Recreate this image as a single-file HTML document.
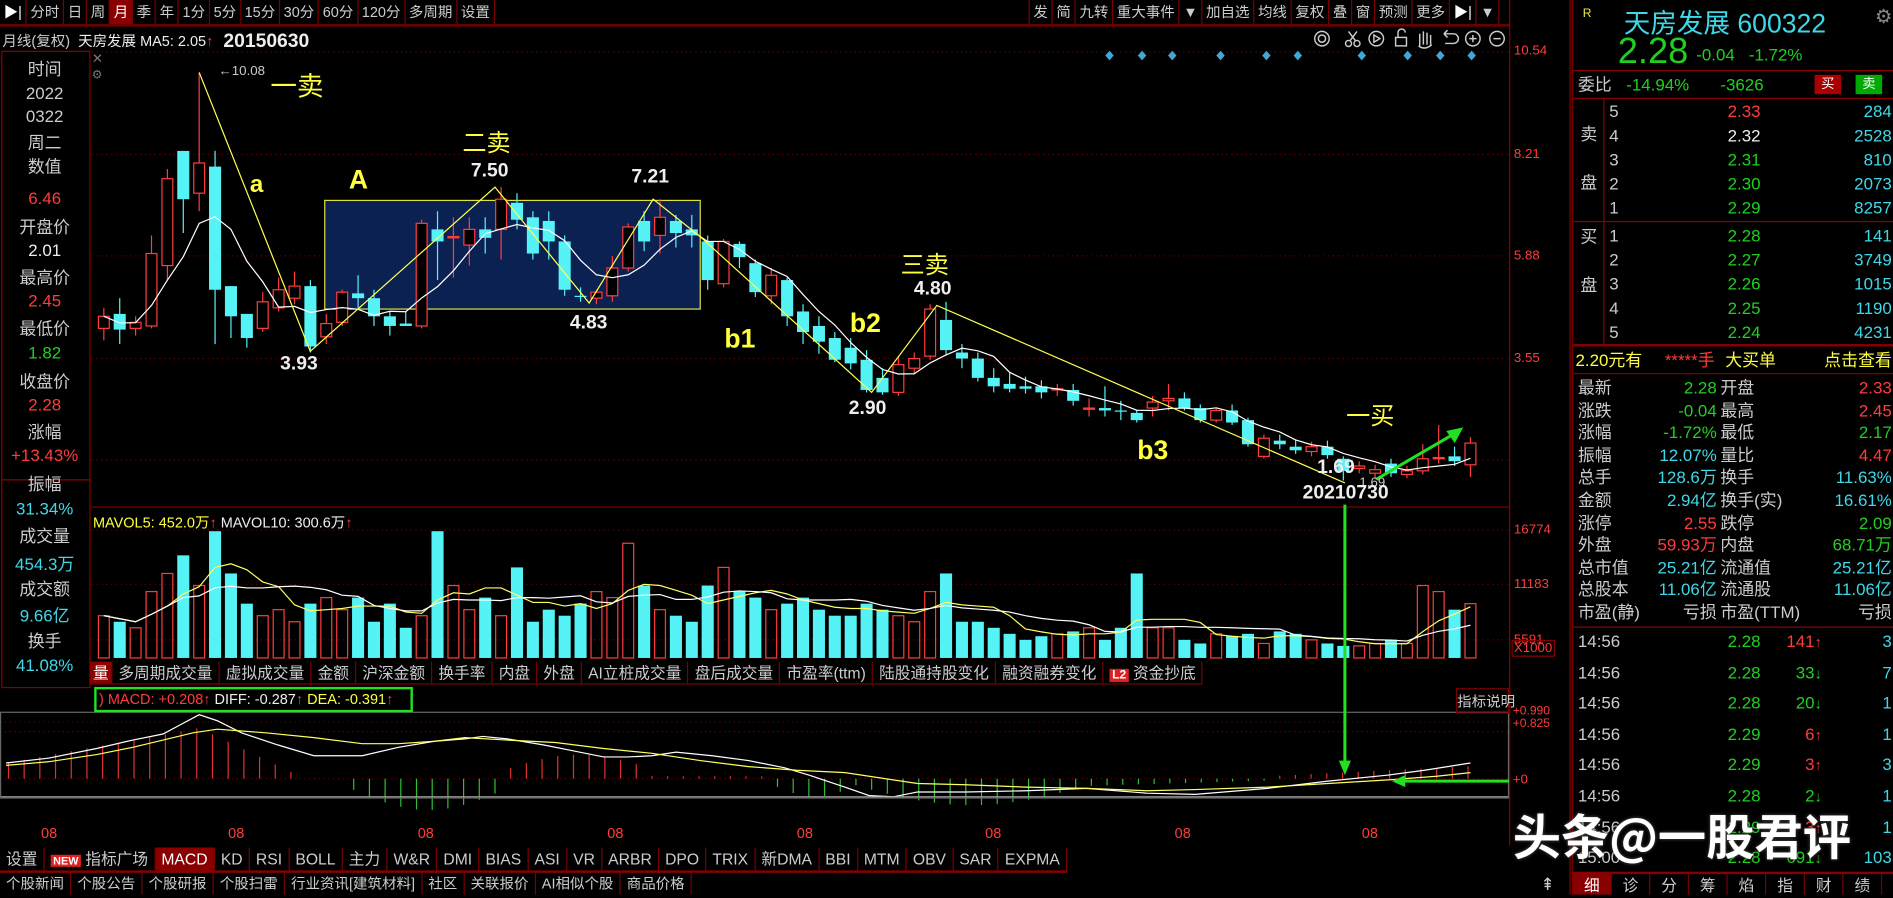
<!DOCTYPE html>
<html><head><meta charset="utf-8">
<style>
*{margin:0;padding:0;box-sizing:border-box}
html,body{width:1893px;height:894px;background:#000;overflow:hidden}
#w{position:absolute;left:0;top:0;width:1568px;height:741px;transform:scale(1.20727);transform-origin:0 0;background:#000;font-family:"Liberation Sans","Noto Sans CJK SC",sans-serif;color:#ddd;font-size:12px}
.a{position:absolute;white-space:nowrap}
.tb{position:absolute;display:flex;height:21px;border-bottom:1px solid #7a0000}
.tb span{border-right:1px solid #7a0000;padding:0 3px;line-height:21px;font-size:12px;color:#ccc}
.tb span.on{background:#8a0000;color:#fff}
.lp div{position:absolute;left:0;width:74px;text-align:center;font-size:14px}
.r{color:#ff3c3c}.g{color:#20d020}.c{color:#3fd8e8}.w{color:#eee}.y{color:#ffff40}.gr{color:#ccc}
.rp{position:absolute;left:1302px;top:0;width:266px;height:741px;border-left:1px solid #7a0000}
.row{position:absolute;left:0;width:266px;height:20px;font-size:14px;line-height:20px}
.row span{position:absolute}
.hl{position:absolute;left:0;width:266px;height:1px;background:#8a0000}
.bt{position:absolute;display:flex;height:20px}
.bt span{border-right:1px solid #7a0000;padding:0 5px;line-height:20px;font-size:13px;color:#ccc}
</style></head><body><div id="w">

<div class="tb" style="left:0;top:0;width:1250px">
<span style="color:#fff">▶|</span><span>分时</span><span>日</span><span>周</span><span class="on">月</span><span>季</span><span>年</span><span>1分</span><span>5分</span><span>15分</span><span>30分</span><span>60分</span><span>120分</span><span>多周期</span><span>设置</span>
</div>
<div class="tb" style="left:852px;top:0;border-bottom:none">
<span style="border-left:1px solid #7a0000">发</span><span>简</span><span>九转</span><span>重大事件</span><span>▼</span><span>加自选</span><span>均线</span><span>复权</span><span>叠</span><span>窗</span><span>预测</span><span>更多</span><span style="color:#fff">▶|</span><span>▼</span>
</div>
<div class="a" style="left:0;top:21px;width:1250px;height:1px;background:#7a0000"></div>
<div class="a" style="left:1250px;top:0;width:1px;height:700px;background:#8a0000"></div>
<div class="a" style="left:1300px;top:0;width:1px;height:741px;background:#8a0000"></div>

<div class="a gr" style="left:2px;top:25px;font-size:12px">月线(复权)&nbsp; <span class="w">天房发展</span> <span class="w">MA5: 2.05</span><span class="r">↑</span></div>
<div class="a w" style="left:185px;top:26px;font-size:16px;font-weight:bold">20150630</div>

<div class="a" style="left:1px;top:42px;width:74px;height:356px;border:1px solid #8a0000"></div>
<div class="a" style="left:1px;top:397px;width:74px;height:173px;border:1px solid #8a0000"></div>
<div class="a" style="left:76px;top:44px;width:10px;height:12px;color:#777;font-size:11px;line-height:10px">✕</div>
<div class="a" style="left:76px;top:57px;width:10px;height:10px;color:#777;font-size:10px">⚙</div>
<div class="lp">
<div class="gr" style="top:47px">时间</div>
<div class="gr" style="top:69px">2022</div>
<div class="gr" style="top:88px">0322</div>
<div class="gr" style="top:108px">周二</div>
<div class="gr" style="top:128px">数值</div>
<div class="r" style="top:156px">6.46</div>
<div class="gr" style="top:178px">开盘价</div>
<div class="w" style="top:199px">2.01</div>
<div class="gr" style="top:220px">最高价</div>
<div class="r" style="top:241px">2.45</div>
<div class="gr" style="top:262px">最低价</div>
<div class="g" style="top:284px">1.82</div>
<div class="gr" style="top:306px">收盘价</div>
<div class="r" style="top:327px">2.28</div>
<div class="gr" style="top:348px">涨幅</div>
<div class="r" style="top:369px">+13.43%</div>
<div class="gr" style="top:391px">振幅</div>
<div class="c" style="top:413px">31.34%</div>
<div class="gr" style="top:434px">成交量</div>
<div class="c" style="top:457px">454.3万</div>
<div class="gr" style="top:478px">成交额</div>
<div class="c" style="top:500px">9.66亿</div>
<div class="gr" style="top:521px">换手</div>
<div class="c" style="top:543px">41.08%</div>
</div>

<svg class="a" style="left:0;top:0" width="1300" height="741" id="sv">
<g stroke="#6a0000" stroke-dasharray="1,3">
<line x1="76" y1="43" x2="1250" y2="43"/><line x1="76" y1="128" x2="1250" y2="128"/><line x1="76" y1="212" x2="1250" y2="212"/><line x1="76" y1="297" x2="1250" y2="297"/><line x1="76" y1="381" x2="1250" y2="381"/>
<line x1="76" y1="439" x2="1250" y2="439"/><line x1="76" y1="484" x2="1250" y2="484"/><line x1="76" y1="530" x2="1250" y2="530"/>
<line x1="0" y1="598" x2="1250" y2="598"/><line x1="0" y1="606" x2="1250" y2="606"/><line x1="0" y1="645" x2="1250" y2="645"/>
</g>
<line x1="76" y1="420" x2="1250" y2="420" stroke="#8a0000"/>
<rect x="269" y="166" width="311" height="90" fill="#0b2152" stroke="#e0e040"/>
<g id="cd"></g>
<polyline id="ma" fill="none" stroke="#fff" stroke-width="1"/>
<g fill="none" stroke="#ffff50" stroke-width="1">
<polyline points="165,60 257,291 410,155 488,251 541,165 580,196 722,325 776,253 1114,400"/>
</g>
<g fill="#3fa8d8" id="dm"></g>
<g id="vol"></g>
<polyline id="mv5" fill="none" stroke="#ffff60"/>
<polyline id="mv10" fill="none" stroke="#fff"/>
<g id="mh"></g>
<polyline fill="none" stroke="#fff" points="5,632 40,628 80,620 110,613 135,608 150,600 165,592 180,597 200,607 230,617 260,626 300,626 330,619 360,614 385,612 400,610 420,612 450,617 470,621 500,627 520,627 540,626 560,623 590,626 620,630 650,636 670,642 700,652 720,659 740,660 760,656 800,656 850,655 900,653 950,657 990,658 1050,653 1100,647 1150,642 1180,638 1218,632"/>
<polyline fill="none" stroke="#ffff60" points="5,634 40,631 80,625 110,619 135,613 160,607 180,604 220,607 260,611 300,616 330,616 360,614 385,611 420,613 460,615 500,620 540,624 580,630 620,635 660,638 700,640 720,643 760,649 800,650 850,652 900,653 950,655 990,654 1050,652 1100,649 1150,646 1190,643 1218,640"/>
<line x1="0" y1="660" x2="1250" y2="660" stroke="#aaa"/>
<rect x="0.5" y="590" width="1249" height="71" fill="none" stroke="#666"/>
<line x1="1114" y1="418" x2="1114" y2="636" stroke="#22e022" stroke-width="2.5"/>
<polygon points="1109,630 1119,630 1114,642" fill="#22e022"/>
<line x1="1250" y1="647" x2="1160" y2="647" stroke="#22e022" stroke-width="2.5"/>
<polygon points="1164,642 1164,652 1153,647" fill="#22e022"/>
<line x1="1140" y1="397" x2="1205" y2="359" stroke="#22e022" stroke-width="2.5"/>
<polygon points="1212,354 1198,357 1205,367" fill="#22e022"/>
<g fill="none" stroke="#ccc" stroke-width="1.2">
<circle cx="1095" cy="32" r="6"/><circle cx="1095" cy="32" r="3"/>
<circle cx="1117" cy="36" r="2.5"/><circle cx="1124" cy="36" r="2.5"/><path d="M1118,34 L1124,26 M1123,34 L1117,26"/>
<circle cx="1140" cy="32" r="6"/><path d="M1138,29 L1143,32 L1138,35Z"/>
<rect x="1156" y="31" width="9" height="7"/><path d="M1158,31 V27 a3,3 0 0 1 6,0"/>
<path d="M1176,38 V28 M1179,37 V26 M1182,37 V27 M1185,37 V29 M1175,38 Q1180,42 1186,37"/>
<path d="M1196,28 H1204 a4,4 0 0 1 0,8 H1197 M1196,28 l3,-3 M1196,28 l3,3"/>
<circle cx="1220" cy="32" r="6"/><path d="M1217,32 H1223 M1220,29 V35"/>
<circle cx="1240" cy="32" r="6"/><path d="M1237,32 H1243"/>
</g>
</svg>

<div class="a gr" style="left:181px;top:53px;font-size:11px">←10.08</div>
<div class="a y" style="left:224px;top:54px;font-size:22px">一卖</div>
<div class="a y" style="left:207px;top:142px;font-size:20px;font-weight:bold">a</div>
<div class="a y" style="left:289px;top:136px;font-size:22px;font-weight:bold">A</div>
<div class="a y" style="left:383px;top:102px;font-size:20px">二卖</div>
<div class="a w" style="left:390px;top:133px;font-size:16px;font-weight:bold">7.50</div>
<div class="a w" style="left:523px;top:138px;font-size:16px;font-weight:bold">7.21</div>
<div class="a w" style="left:472px;top:259px;font-size:16px;font-weight:bold">4.83</div>
<div class="a w" style="left:232px;top:293px;font-size:16px;font-weight:bold">3.93</div>
<div class="a y" style="left:600px;top:268px;font-size:22px;font-weight:bold">b1</div>
<div class="a y" style="left:704px;top:255px;font-size:22px;font-weight:bold">b2</div>
<div class="a y" style="left:746px;top:203px;font-size:20px">三卖</div>
<div class="a w" style="left:757px;top:231px;font-size:16px;font-weight:bold">4.80</div>
<div class="a w" style="left:703px;top:330px;font-size:16px;font-weight:bold">2.90</div>
<div class="a y" style="left:942px;top:360px;font-size:22px;font-weight:bold">b3</div>
<div class="a y" style="left:1115px;top:328px;font-size:20px">一买</div>
<div class="a gr" style="left:1126px;top:394px;font-size:11px">1.69</div>
<div class="a w" style="left:1091px;top:379px;font-size:16px;font-weight:bold">1.69</div>
<div class="a w" style="left:1079px;top:400px;font-size:16px;font-weight:bold">20210730</div>

<div class="a" style="left:77px;top:424px;font-size:12px"><span class="y">MAVOL5: 452.0万</span><span class="r">↑</span> <span class="w">MAVOL10: 300.6万</span><span class="r">↑</span></div>

<div class="a r" style="left:1254px;top:36px;font-size:11px">10.54</div>
<div class="a r" style="left:1254px;top:122px;font-size:11px">8.21</div>
<div class="a r" style="left:1254px;top:206px;font-size:11px">5.88</div>
<div class="a r" style="left:1254px;top:291px;font-size:11px">3.55</div>
<div class="a r" style="left:1254px;top:433px;font-size:11px">16774</div>
<div class="a r" style="left:1254px;top:478px;font-size:11px">11183</div>
<div class="a r" style="left:1254px;top:524px;font-size:11px">5591</div>
<div class="a r" style="left:1252px;top:530px;font-size:11px;border:1px solid #8a0000;padding:0 1px">X1000</div>
<div class="a r" style="left:1253px;top:585px;font-size:10px;line-height:10px">+0.990<br>+0.825</div>
<div class="a r" style="left:1253px;top:640px;font-size:11px">+0</div>

<div class="bt" style="left:75px;top:548px;height:19px;border-bottom:1px solid #7a0000">
<span style="background:#8a0000;color:#fff;padding:0 2px">量</span><span>多周期成交量</span><span>虚拟成交量</span><span>金额</span><span>沪深金额</span><span>换手率</span><span>内盘</span><span>外盘</span><span>AI立桩成交量</span><span>盘后成交量</span><span>市盈率(ttm)</span><span>陆股通持股变化</span><span>融资融券变化</span><span><b style="background:#e02020;color:#fff;font-size:10px;padding:0 2px">L2</b> 资金抄底</span>
</div>
<div class="a" style="left:78px;top:569px;width:264px;height:21px;border:2px solid #22e022;font-size:12px;line-height:17px;padding-left:2px;background:#000"><span class="r">) MACD: +0.208↑</span> <span class="w">DIFF: -0.287</span><span class="r">↑</span> <span class="y">DEA: -0.391</span><span class="r">↑</span></div>
<div class="a gr" style="left:1206px;top:570px;width:44px;height:21px;border:1px solid #7a0000;font-size:12px;line-height:20px;text-align:center">指标说明</div>

<div class="a r" style="left:0;top:683px;width:1250px;height:16px;font-size:12px">
<span class="a" style="left:34px">08</span><span class="a" style="left:189px">08</span><span class="a" style="left:346px">08</span><span class="a" style="left:503px">08</span><span class="a" style="left:660px">08</span><span class="a" style="left:816px">08</span><span class="a" style="left:973px">08</span><span class="a" style="left:1128px">08</span>
</div>

<div class="bt" style="left:0;top:702px;border-bottom:2px solid #8a0000;height:21px">
<span>设置</span><span><b style="background:#e02020;color:#fff;font-size:9px;padding:0 2px">NEW</b> 指标广场</span><span style="background:#8a0000;color:#fff">MACD</span><span>KD</span><span>RSI</span><span>BOLL</span><span>主力</span><span>W&amp;R</span><span>DMI</span><span>BIAS</span><span>ASI</span><span>VR</span><span>ARBR</span><span>DPO</span><span>TRIX</span><span>新DMA</span><span>BBI</span><span>MTM</span><span>OBV</span><span>SAR</span><span>EXPMA</span>
</div>
<div class="bt" style="left:0;top:723px;height:18px">
<span style="font-size:12px;line-height:18px">个股新闻</span><span style="font-size:12px;line-height:18px">个股公告</span><span style="font-size:12px;line-height:18px">个股研报</span><span style="font-size:12px;line-height:18px">个股扫雷</span><span style="font-size:12px;line-height:18px">行业资讯[建筑材料]</span><span style="font-size:12px;line-height:18px">社区</span><span style="font-size:12px;line-height:18px">关联报价</span><span style="font-size:12px;line-height:18px">AI相似个股</span><span style="font-size:12px;line-height:18px">商品价格</span>
</div>
<div class="a gr" style="left:1276px;top:724px;font-size:14px">⇞</div>

<div class="rp">
<div class="a" style="left:8px;top:6px;font-size:10px;color:#ee4">R</div>
<div class="a c" style="left:42px;top:2px;font-size:22px">天房发展 600322</div>
<div class="a" style="left:250px;top:4px;font-size:16px;color:#888">⚙</div>
<div class="a g" style="left:37px;top:26px;font-size:30px">2.28</div>
<div class="a g" style="left:102px;top:37px;font-size:14px">-0.04&nbsp;&nbsp; -1.72%</div>
<div class="hl" style="top:58px"></div>
<div class="row" style="top:60px"><span class="gr" style="left:4px">委比</span><span class="g" style="left:44px">-14.94%</span><span class="g" style="left:122px">-3626</span>
<span style="left:200px;top:2px;width:22px;height:16px;background:#a00;color:#fff;font-size:11px;line-height:16px;text-align:center">买</span><span style="left:234px;top:2px;width:22px;height:16px;background:#0a0;color:#fff;font-size:11px;line-height:16px;text-align:center">卖</span></div>
<div class="hl" style="top:81px"></div>
<div class="a" style="left:25px;top:81px;width:1px;height:204px;background:#8a0000"></div>
<div class="row gr" style="top:101px"><span style="left:6px">卖</span></div>
<div class="row gr" style="top:141px"><span style="left:6px">盘</span></div>
<div class="row gr" style="top:186px"><span style="left:6px">买</span></div>
<div class="row gr" style="top:226px"><span style="left:6px">盘</span></div>
<div class="row" style="top:82px"><span class="gr" style="left:30px">5</span><span class="r" style="left:128px">2.33</span><span class="c" style="right:2px">284</span></div>
<div class="row" style="top:102px"><span class="gr" style="left:30px">4</span><span class="w" style="left:128px">2.32</span><span class="c" style="right:2px">2528</span></div>
<div class="row" style="top:122px"><span class="gr" style="left:30px">3</span><span class="g" style="left:128px">2.31</span><span class="c" style="right:2px">810</span></div>
<div class="row" style="top:142px"><span class="gr" style="left:30px">2</span><span class="g" style="left:128px">2.30</span><span class="c" style="right:2px">2073</span></div>
<div class="row" style="top:162px"><span class="gr" style="left:30px">1</span><span class="g" style="left:128px">2.29</span><span class="c" style="right:2px">8257</span></div>
<div class="hl" style="top:183px"></div>
<div class="row" style="top:185px"><span class="gr" style="left:30px">1</span><span class="g" style="left:128px">2.28</span><span class="c" style="right:2px">141</span></div>
<div class="row" style="top:205px"><span class="gr" style="left:30px">2</span><span class="g" style="left:128px">2.27</span><span class="c" style="right:2px">3749</span></div>
<div class="row" style="top:225px"><span class="gr" style="left:30px">3</span><span class="g" style="left:128px">2.26</span><span class="c" style="right:2px">1015</span></div>
<div class="row" style="top:245px"><span class="gr" style="left:30px">4</span><span class="g" style="left:128px">2.25</span><span class="c" style="right:2px">1190</span></div>
<div class="row" style="top:265px"><span class="gr" style="left:30px">5</span><span class="g" style="left:128px">2.24</span><span class="c" style="right:2px">4231</span></div>
<div class="hl" style="top:285px;height:2px"></div>
<div class="row" style="top:288px"><span class="y" style="left:2px">2.20元有</span><span class="r" style="left:76px">*****手</span><span class="y" style="left:126px">大买单</span><span class="y" style="right:2px">点击查看</span></div>
<div class="hl" style="top:309px"></div>
<div id="st"></div>
<div class="hl" style="top:519px"></div>
<div id="tr"></div>
<div class="a" style="left:-50px;top:662px;font-size:40px;font-weight:bold;color:#fff;text-shadow:0 0 3px #555;font-family:'Noto Sans CJK SC',sans-serif">头条@一股君评</div>
<div class="bt" style="left:0;top:722px;height:19px;border-top:2px solid #8a0000">
<span style="background:#8a0000;color:#fff;padding:0 9px">细</span><span style="padding:0 9px">诊</span><span style="padding:0 9px">分</span><span style="padding:0 9px">筹</span><span style="padding:0 9px">焰</span><span style="padding:0 9px">指</span><span style="padding:0 9px">财</span><span style="padding:0 9px">绩</span><span style="padding:0 9px">价</span>
</div>
</div>

<script>
var NS="http://www.w3.org/2000/svg";
function el(p,t,a){var e=document.createElementNS(NS,t);for(var k in a)e.setAttribute(k,a[k]);p.appendChild(e);return e;}
var C=[[262,272,255,282,'r'],[260,273,247,285,'c'],[267,272,262,278,'r'],[210,270,195,272,'r'],[148,220,140,232,'r'],[125,165,125,193,'c'],[135,160,60,175,'r'],[138,240,125,285,'c'],[237,262,237,280,'c'],[260,280,260,288,'c'],[250,272,242,275,'r'],[240,255,230,258,'r'],[237,247,225,252,'r'],[237,287,232,292,'c'],[268,279,260,285,'r'],[242,267,240,270,'r'],[243,247,228,255,'c'],[247,262,240,270,'c'],[262,270,258,278,'c'],[268,270,258,270,'c'],[185,270,182,272,'r'],[190,200,175,232,'c'],[196,197,180,230,'r'],[190,203,180,220,'r'],[190,197,180,210,'c'],[165,190,155,215,'r'],[168,182,160,190,'c'],[180,210,175,215,'c'],[183,200,175,215,'c'],[200,240,195,245,'c'],[245,246,238,250,'c'],[242,247,240,252,'r'],[222,245,212,250,'r'],[188,222,185,225,'r'],[183,200,175,208,'c'],[180,195,165,210,'r'],[183,193,178,205,'c'],[190,195,178,205,'c'],[200,232,195,240,'c'],[200,235,198,238,'r'],[202,213,200,222,'c'],[218,242,215,246,'c'],[228,245,222,252,'r'],[232,262,230,270,'c'],[258,275,252,285,'c'],[270,283,262,293,'c'],[280,298,275,300,'c'],[288,301,280,306,'c'],[298,323,290,325,'c'],[313,325,305,327,'c'],[302,325,295,328,'r'],[297,305,292,310,'r'],[256,295,252,298,'r'],[265,290,250,294,'c'],[292,297,285,305,'c'],[297,313,292,316,'c'],[313,320,305,325,'c'],[318,322,308,325,'c'],[320,322,312,326,'c'],[320,325,315,330,'c'],[322,323,318,328,'r'],[323,332,318,336,'c'],[338,339,330,345,'r'],[338,340,320,345,'c'],[340,341,332,348,'c'],[342,348,340,350,'c'],[333,338,328,345,'r'],[330,332,318,340,'r'],[330,338,325,340,'c'],[338,348,335,350,'c'],[340,348,338,350,'r'],[340,350,335,352,'c'],[348,368,346,370,'c'],[363,378,360,380,'r'],[365,368,360,372,'c'],[370,373,364,376,'c'],[370,374,366,378,'r'],[370,377,365,380,'c'],[380,390,378,398,'c'],[386,388,382,392,'r'],[389,392,385,396,'r'],[384,392,380,395,'c'],[390,393,386,396,'r'],[380,390,368,393,'r'],[379,380,352,384,'r'],[378,382,370,386,'c'],[367,385,362,395,'r']];
var V=[35,30,25,55,70,85,60,105,70,45,35,40,30,45,50,40,50,30,45,25,35,105,60,40,50,35,75,30,40,35,45,55,50,95,60,40,35,30,60,75,55,50,40,45,50,40,35,35,45,40,35,30,55,70,30,30,25,20,15,18,20,22,25,15,25,70,25,25,15,12,20,18,20,12,22,20,15,12,10,10,12,15,12,60,55,40,45];
var g=document.getElementById('cd'),vg=document.getElementById('vol'),mh=document.getElementById('mh');
var n=C.length,dx=(1218-86)/(n-1),ma=[],cl=[],m5=[],m10=[];
for(var i=0;i<n;i++){var x=86+i*dx,c=C[i],col=c[4]=='r'?'#ff3c3c':'#55f2f6';
el(g,'line',{x1:x,x2:x,y1:c[2],y2:c[3],stroke:col});
var h=Math.max(1,c[1]-c[0]);
if(c[4]=='r')el(g,'rect',{x:x-4.5,y:c[0],width:9,height:h,fill:'#000',stroke:col});
else el(g,'rect',{x:x-5,y:c[0],width:10,height:h,fill:col});
cl.push(c[4]=='r'?c[0]:c[1]);
var s=0,k=0;for(var j=Math.max(0,i-4);j<=i;j++){s+=cl[j];k++;}ma.push(x.toFixed(1)+','+(s/k).toFixed(1));
var vh=V[i]||15,vy=545-vh;
if(c[4]=='r')el(vg,'rect',{x:x-4.5,y:vy,width:9,height:vh,fill:'none',stroke:col});
else el(vg,'rect',{x:x-5,y:vy,width:10,height:vh,fill:col});
var s5=0,k5=0;for(j=Math.max(0,i-4);j<=i;j++){s5+=V[j]||15;k5++;}m5.push(x.toFixed(1)+','+(545-s5/k5).toFixed(1));
var s10=0,k10=0;for(j=Math.max(0,i-9);j<=i;j++){s10+=V[j]||15;k10++;}m10.push(x.toFixed(1)+','+(545-s10/k10).toFixed(1));
}
document.getElementById('ma').setAttribute('points',ma.join(' '));
document.getElementById('mv5').setAttribute('points',m5.join(' '));
document.getElementById('mv10').setAttribute('points',m10.join(' '));
var hist=[];for(i=0;i<95;i++){var x=7+i*13,v=0;
if(x<165)v=12+(x/165)*30;else if(x<250)v=42-(x-165)*0.48;else if(x<290)v=0;else if(x<420)v=-(8+Math.sin((x-290)/130*Math.PI)*18);else if(x<540)v=8+Math.sin((x-420)/120*Math.PI)*12;else if(x<640)v=2;else if(x<710)v=-(5+Math.sin((x-640)/70*Math.PI)*10);else if(x<900)v=-(6+Math.sin((x-710)/190*Math.PI)*16);else if(x<1050)v=-(6-(x-900)*0.03);else v=(x-1050)*0.05+2;
if(x>1218)break;hist.push([x,v]);}
hist.forEach(function(h){el(mh,'line',{x1:h[0],x2:h[0],y1:645,y2:645-h[1],stroke:h[1]>0?'#e03030':'#30c030'});});
var dm=document.getElementById('dm');[919,946,971,1011,1049,1075,1128,1166,1193,1219].forEach(function(x){el(dm,'polygon',{points:(x)+',42 '+(x+3.5)+',46 '+x+',50 '+(x-3.5)+',46'});});
var S=[['最新','2.28','g','开盘','2.33','r'],['涨跌','-0.04','g','最高','2.45','r'],['涨幅','-1.72%','g','最低','2.17','g'],['振幅','12.07%','c','量比','4.47','r'],['总手','128.6万','c','换手','11.63%','c'],['金额','2.94亿','c','换手(实)','16.61%','c'],['涨停','2.55','r','跌停','2.09','g'],['外盘','59.93万','r','内盘','68.71万','g'],['总市值','25.21亿','c','流通值','25.21亿','c'],['总股本','11.06亿','c','流通股','11.06亿','c'],['市盈(静)','亏损','gr','市盈(TTM)','亏损','gr']];
var st=document.getElementById('st'),h='';
S.forEach(function(s,i){var t=311+i*18.6;h+='<div class="row" style="top:'+t+'px"><span class="gr" style="left:4px">'+s[0]+'</span><span class="'+s[2]+'" style="right:147px">'+s[1]+'</span><span class="gr" style="left:122px">'+s[3]+'</span><span class="'+s[5]+'" style="right:2px">'+s[4]+'</span></div>';});
st.innerHTML=h;
var T=[['14:56','2.28','141','r','↑','3'],['14:56','2.28','33','g','↓','7'],['14:56','2.28','20','g','↓','1'],['14:56','2.29','6','r','↑','1'],['14:56','2.29','3','r','↑','3'],['14:56','2.28','2','g','↓','1'],['14:56','2.29','3','r','↑','1'],['15:00','2.28','691','g','↓','103']];
h='';T.forEach(function(s,i){var t=521+i*25.6;h+='<div class="row" style="top:'+t+'px"><span class="gr" style="left:4px">'+s[0]+'</span><span class="g" style="left:128px">'+s[1]+'</span><span class="'+s[3]+'" style="right:60px">'+s[2]+'<b style="font-size:12px">'+s[4]+'</b></span><span class="c" style="right:2px">'+s[5]+'</span></div>';});
document.getElementById('tr').innerHTML=h;
</script>
</div></body></html>
